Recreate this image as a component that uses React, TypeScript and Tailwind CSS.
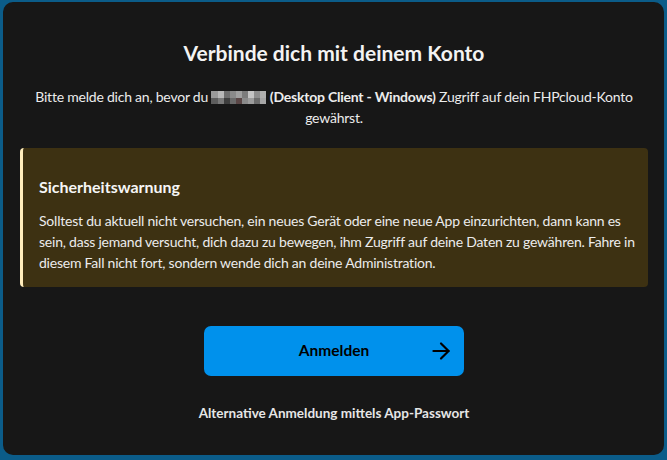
import { ArrowRight } from "lucide-react";

const blurCells = [
  "#9a9a9a", "#b8b8b8", "#6e6e6e", "#8a8a8a", "#a0a0a0", "#7c7c7c", "#c4c4c4", "#8e8e8e", "#b0b0b0",
  "#5e5e5e", "#7a7a7a", "#3e3e3e", "#6a6a6a", "#5a4646", "#8a8a8a", "#9c9c9c", "#6c6c6c", "#a6a6a6",
];

// pixelated name placeholder
function BlurredName() {
  return (
    <span className="inline-block w-[55px] h-[13px] align-[-2px] overflow-hidden">
      <span className="grid grid-cols-9 grid-rows-2 w-[55px] h-[13px]">
        {blurCells.map((c, i) => (
          <span key={i} style={{ backgroundColor: c }} />
        ))}
      </span>
    </span>
  );
}

export default function App() {
  return (
    <div className="h-[460px] w-full bg-[#0b5c89] pt-[2px] pl-[3px] pr-[3px] pb-[5px] flex font-['Lato',sans-serif]">
      <div className="flex-1 bg-[#171717] rounded-[10px] pt-[37px] pl-[17px] pr-4 flex flex-col">
        {/* Title */}
        <h2 className="text-center text-[21px] leading-[28px] font-bold text-[#f3f3f3]">
          Verbinde dich mit deinem Konto
        </h2>

        <p className="mt-[20px] text-center text-[14px] leading-[20.5px] tracking-[-0.22px] text-[#ececec]">
          Bitte melde dich an, bevor du <BlurredName />{" "}
          <span className="font-bold">(Desktop Client - Windows)</span> Zugriff auf dein FHPcloud-Konto
          gewährst.
        </p>

        {/* Security warning */}
        <div className="mt-[20px] bg-[#3d3112] rounded-[4px] border-l-[3px] border-[#ffedbd] pl-[16px] pr-3 pt-[28px] pb-[14px]">
          <h3 className="text-[16px] leading-[21px] font-bold text-[#f6f6f6]">Sicherheitswarnung</h3>
          <p className="mt-[13px] text-[14px] leading-[21px] tracking-[-0.22px] text-[#ececec]">
            Solltest du aktuell nicht versuchen, ein neues Gerät oder eine neue App einzurichten, dann kann es
            sein, dass jemand versucht, dich dazu zu bewegen, ihm Zugriff auf deine Daten zu gewähren. Fahre in
            diesem Fall nicht fort, sondern wende dich an deine Administration.
          </p>
        </div>

        {/* Login button */}
        <div className="mt-[39px] flex justify-center">
          <button className="relative w-[260px] h-[50px] rounded-[7px] bg-[#0091ec] text-black text-[15.5px] font-bold flex items-center justify-center">
            Anmelden
            <ArrowRight className="absolute right-[10px] top-[12px]" size={26} strokeWidth={2} />
          </button>
        </div>

        <div className="mt-[24px] text-center">
          <a className="text-[13.5px] leading-[20px] font-bold text-[#e6e6e6] cursor-pointer">
            Alternative Anmeldung mittels App-Passwort
          </a>
        </div>
      </div>
    </div>
  );
}
